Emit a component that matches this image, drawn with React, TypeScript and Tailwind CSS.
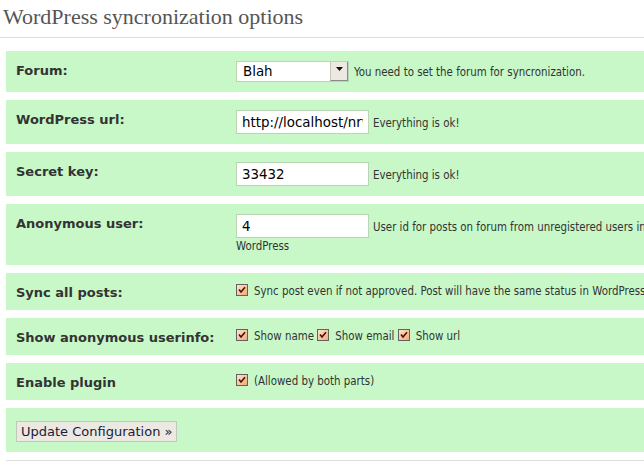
import React from "react";

const labelFont = "font-['DejaVu_Sans','Liberation_Sans',sans-serif]";
const smallFont = "font-['DejaVu_Sans_Condensed','DejaVu_Sans','Liberation_Sans',sans-serif]";
const inputFont = "font-['DejaVu_Sans','Liberation_Sans',sans-serif]";

function Check() {
  return (
    <svg width="12" height="12" viewBox="0 0 12 12" className="inline-block align-[-1px] mr-[6px]">
      <defs>
        <linearGradient id="cbg" x1="0" y1="0" x2="1" y2="1">
          <stop offset="0" stopColor="#fee7d4" />
          <stop offset="1" stopColor="#f3a673" />
        </linearGradient>
      </defs>
      <rect x="0.5" y="0.5" width="11" height="11" fill="url(#cbg)" stroke="#616161" />
      <path d="M3 5.6 L5 8 L9 3.2" stroke="#4a1200" strokeWidth="1.6" fill="none" />
    </svg>
  );
}

function Row({ label, children }: { label: string; children: React.ReactNode }) {
  return (
    <div className="flex bg-[#c8f8c8]">
      <div className={`w-[230px] shrink-0 pl-[10px] pt-[11px] text-[13px] leading-[18px] font-bold text-[#333] ${labelFont}`}>
        {label}
      </div>
      <div className={`flex-1 py-[10px] pr-[36px] text-[11.4px] leading-[17px] text-[#333] ${smallFont}`}>{children}</div>
    </div>
  );
}

function TextInput({ value }: { value: string }) {
  return (
    <input
      readOnly
      value={value}
      className={`w-[133px] h-[24px] border border-[#b9d5b3] bg-white px-[5px] text-[13.4px] text-black outline-none align-baseline mr-[4px] ${inputFont}`}
    />
  );
}

export default function App() {
  return (
    <div className="w-[644px] h-[470px] overflow-hidden bg-white">
      <h2 className="pt-[3px] pb-[6px] pl-[3px] text-[22px] leading-[28px] text-[#555] font-['Georgia','Liberation_Serif',serif] font-normal border-b border-[#ddd] whitespace-nowrap">
        WordPress syncronization options
      </h2>
      <div className="ml-[6px] w-[700px] mt-[13px] flex flex-col gap-[8px]">
        <Row label="Forum:">
          <span className={`inline-flex w-[113px] h-[21px] bg-white border border-[#b9d5b3] align-baseline mr-[5px] ${inputFont}`}>
            <span className="flex-1 pl-[6px] text-[13.4px] leading-[19px] text-black">Blah</span>
            <span className="w-[18px] bg-[#ece9e2] border-l border-[#c8c4bc] border-r border-b border-r-[#8a8a8a] border-b-[#8a8a8a] flex justify-center pt-[5px]">
              <svg width="7" height="4" viewBox="0 0 7 4">
                <path d="M0 0 H7 L3.5 4 Z" fill="#111" />
              </svg>
            </span>
          </span>
          You need to set the forum for syncronization.
        </Row>
        <Row label="WordPress url:">
          <TextInput value="http://localhost/nrwordpress" />
          Everything is ok!
        </Row>
        <Row label="Secret key:">
          <TextInput value="33432" />
          Everything is ok!
        </Row>
        <Row label="Anonymous user:">
          <TextInput value="4" />
          User id for posts on forum from unregistered users in WordPress
        </Row>
        <Row label="Sync all posts:">
          <Check />
          Sync post even if not approved. Post will have the same status in WordPress.
        </Row>
        <Row label="Show anonymous userinfo:">
          <Check />
          Show name <Check />
          Show email <Check />
          Show url
        </Row>
        <Row label="Enable plugin">
          <Check />
          (Allowed by both parts)
        </Row>
        <div className="bg-[#c8f8c8] px-[10px] py-[10px]">
          <button
            type="button"
            className={`h-[21px] px-[4px] bg-[#ece9e2] border border-[#bfc9b9] text-[13px] leading-[19px] text-[#1a1a3a] ${inputFont}`}
          >
            Update Configuration »
          </button>
        </div>
      </div>
      <div className="ml-[6px] mt-[8px] border-b border-[#ddd]" />
    </div>
  );
}
